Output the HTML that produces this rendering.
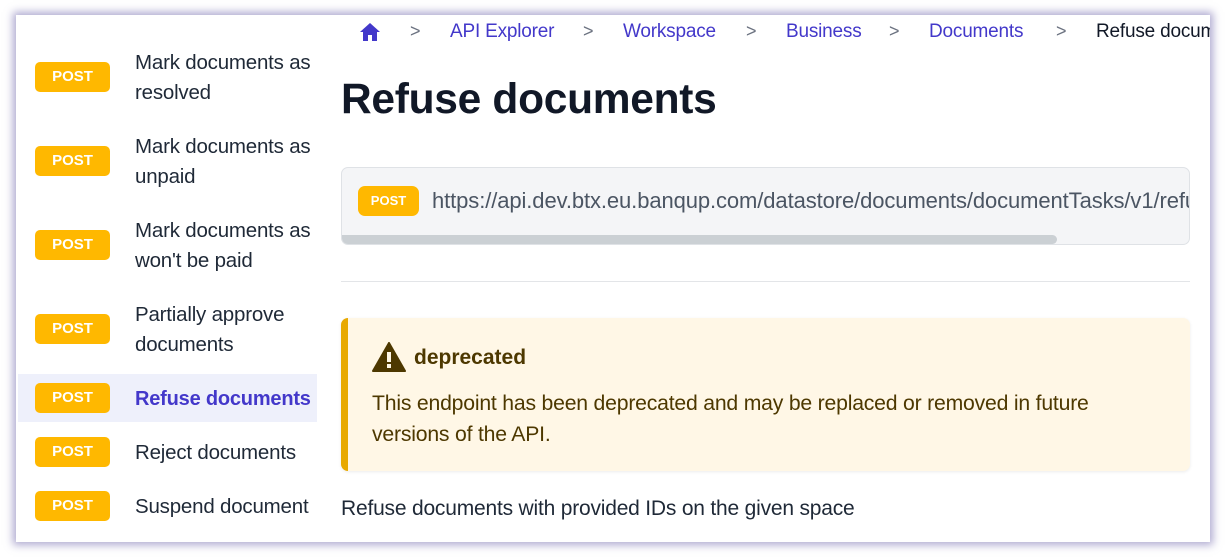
<!DOCTYPE html>
<html><head><meta charset="utf-8"><style>
*{margin:0;padding:0;box-sizing:border-box}
body{width:1226px;height:558px;background:#fff;position:relative;overflow:hidden;font-family:"Liberation Sans",sans-serif;color:#1f2937}
.panel{position:absolute;left:16px;top:15px;width:1194px;height:527px;background:#fff;box-shadow:0 0 8px 3px rgba(110,100,170,.55);overflow:hidden}
.a{position:absolute;white-space:nowrap}
.badge{position:absolute;left:19px;width:75px;height:30px;background:#ffb800;border-radius:5px;color:#fff;font-weight:bold;font-size:15px;text-align:center;line-height:30px}
.it{position:absolute;left:119px;font-size:20.5px;line-height:30px;color:#1f2937;letter-spacing:-0.2px;white-space:nowrap}
.bc{position:absolute;top:6px;font-size:19px;color:#4338ca;letter-spacing:-0.2px;white-space:nowrap}
.sep{position:absolute;top:6px;font-size:18px;color:#6b7280}
</style></head><body>
<div class="panel">
 <div class="badge" style="top:47px">POST</div><div class="it" style="top:33px">Mark documents as<br>resolved</div>
 <div class="badge" style="top:131px">POST</div><div class="it" style="top:117px">Mark documents as<br>unpaid</div>
 <div class="badge" style="top:215px">POST</div><div class="it" style="top:201px">Mark documents as<br>won't be paid</div>
 <div class="badge" style="top:299px">POST</div><div class="it" style="top:285px">Partially approve<br>documents</div>
 <div class="a" style="left:2px;top:359px;width:299px;height:48px;background:#eef0fb"></div>
 <div class="badge" style="top:368px">POST</div><div class="it" style="top:369px;color:#4338ca;font-weight:bold;font-size:20px">Refuse documents</div>
 <div class="badge" style="top:422px">POST</div><div class="it" style="top:423px">Reject documents</div>
 <div class="badge" style="top:476px">POST</div><div class="it" style="top:477px">Suspend document</div>
 <svg class="a" style="left:343px;top:7px" width="22" height="20" viewBox="0 0 22 20"><path d="M11 1 L1 10 H4 V19 H9 V13 H13 V19 H18 V10 H21 Z" fill="#4338ca"/></svg>
 <div class="sep" style="left:394px">&gt;</div>
 <div class="bc" style="left:434px">API Explorer</div>
 <div class="sep" style="left:567px">&gt;</div>
 <div class="bc" style="left:607px">Workspace</div>
 <div class="sep" style="left:730px">&gt;</div>
 <div class="bc" style="left:770px">Business</div>
 <div class="sep" style="left:873px">&gt;</div>
 <div class="bc" style="left:913px">Documents</div>
 <div class="sep" style="left:1040px">&gt;</div>
 <div class="bc" style="left:1080px;color:#111827">Refuse documents</div>
 <div class="a" style="left:325px;top:61px;font-size:42.5px;font-weight:bold;color:#111827;letter-spacing:-0.3px">Refuse documents</div>
 <div class="a" style="left:325px;top:152px;width:849px;height:78px;background:#f4f5f7;border:1px solid #dfe2e6;border-radius:7px;overflow:hidden">
  <div class="a" style="left:16px;top:18px;width:61px;height:30px;background:#ffb800;border-radius:7px;color:#fff;font-weight:bold;font-size:13px;text-align:center;line-height:30px">POST</div>
  <div class="a" style="left:90px;top:20px;font-size:22px;color:#4b5563;letter-spacing:-0.1px">https://api.dev.btx.eu.banqup.com/datastore/documents/documentTasks/v1/refuse</div>
  <div class="a" style="left:0;top:67px;width:715px;height:9px;background:#cbd0d4;border-radius:0 5px 5px 0"></div>
 </div>
 <div class="a" style="left:325px;top:266px;width:849px;height:1px;background:#e3e5e8"></div>
 <div class="a" style="left:325px;top:303px;width:849px;height:153px;background:#fff7e6;border-radius:7px;border-left:7px solid #e8a900;box-shadow:0 1px 3px rgba(0,0,0,.08)">
  <svg class="a" style="left:24px;top:24px" width="34" height="30" viewBox="0 0 34 30"><path d="M17 1 L33 29 H1 Z" fill="#4d3800" stroke="#4d3800" stroke-linejoin="round" stroke-width="2"/><rect x="15" y="10" width="4" height="10" fill="#fff7e6"/><rect x="15" y="22" width="4" height="4" fill="#fff7e6"/></svg>
  <div class="a" style="left:66px;top:28px;font-size:21px;font-weight:bold;color:#4d3800">deprecated</div>
  <div class="a" style="left:24px;top:70px;font-size:21.2px;line-height:31px;color:#4d3800;white-space:normal;width:760px;letter-spacing:-0.2px">This endpoint has been deprecated and may be replaced or removed in future versions of the API.</div>
 </div>
 <div class="a" style="left:325px;top:482px;font-size:21px;color:#1f2937;letter-spacing:-0.2px">Refuse documents with provided IDs on the given space</div>
</div>
</body></html>
